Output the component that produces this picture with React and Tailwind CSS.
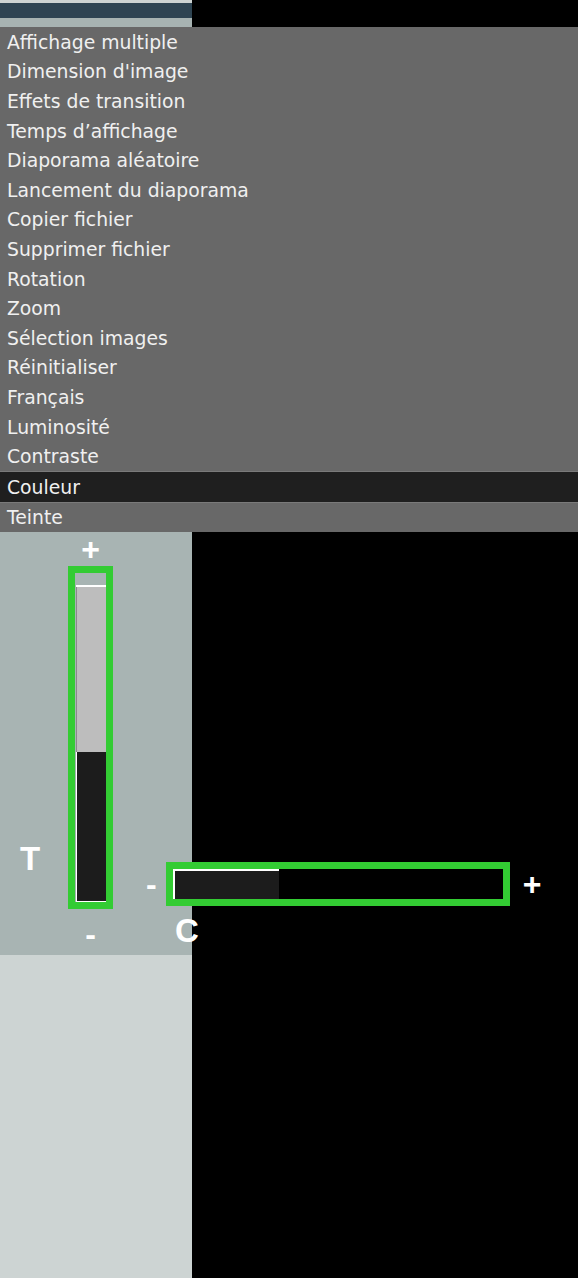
const menuItems = [
  'Affichage multiple',
  "Dimension d'image",
  'Effets de transition',
  'Temps d’affichage',
  'Diaporama aléatoire',
  'Lancement du diaporama',
  'Copier fichier',
  'Supprimer fichier',
  'Rotation',
  'Zoom',
  'Sélection images',
  'Réinitialiser',
  'Français',
  'Luminosité',
  'Contraste',
  'Couleur',
  'Teinte',
];

const label = "font-['Liberation_Sans',Arial,sans-serif] font-bold text-white leading-none";

function VerticalSlider() {
  return (
    <div className="flex w-[45px] flex-col items-center">
      <div className={`flex h-[34px] items-center text-[32px] ${label}`}>+</div>
      <div className="flex h-[343px] w-[45px] flex-col border-[7px] border-[#33cc33] pt-[12px]">
        <div className="ml-px flex w-[30px] flex-1 flex-col border-t-2 border-white">
          <div className="h-[165px] border-l border-[#8a8a8a] bg-[#bdbdbd]" />
          <div className="flex-1 border-b border-l border-white bg-[#1c1c1c]" />
        </div>
      </div>
      <div className={`flex h-[50px] items-center text-[32px] ${label}`}>-</div>
    </div>
  );
}

function HorizontalSlider() {
  return (
    <div className="absolute left-[146px] top-[330px] flex flex-col">
      <div className="flex h-[44px] items-center">
        <span className={`text-[32px] ${label}`}>-</span>
        <div className="ml-[9px] flex h-[44px] w-[344px] border-[7px] border-[#33cc33]">
          <div className="h-full w-[106px] border-l-2 border-t-2 border-white bg-[#1c1c1c]" />
        </div>
        <span className={`ml-[13px] text-[32px] ${label}`}>+</span>
      </div>
      <div className={`mt-[8px] pl-[29px] text-[33px] ${label}`}>C</div>
    </div>
  );
}

export default function App() {
  return (
    <div className="flex h-[1278px] w-[578px] flex-col overflow-hidden bg-black">
      {/* top strip */}
      <div className="flex h-[27px]">
        <div className="flex w-[192px] flex-col">
          <div className="h-[3px] bg-[#cdd3d2]" />
          <div className="h-[15px] bg-[#2e4452]" />
          <div className="flex-1 bg-[#a7b3b2]" />
        </div>
        <div className="flex-1 bg-black" />
      </div>

      {/* menu */}
      <div className="flex h-[505px] flex-col bg-[#686868] font-['DejaVu_Sans',Verdana,sans-serif] text-[18.8px] leading-[22px] text-[#f0f0f0]">
        {menuItems.map((item) => (
          <div
            key={item}
            className={`flex min-h-0 flex-1 basis-0 items-center pl-[7px] pt-[2px] ${
              item === 'Couleur' ? 'border-y border-[#7a7a7a] bg-[#1f1f1f]' : ''
            }`}
          >
            {item}
          </div>
        ))}
      </div>

      {/* controls */}
      <div className="relative flex flex-1">
        <div className="flex w-[192px] flex-col">
          <div className="flex h-[423px] items-start bg-[#a8b4b3] pl-[20px]">
            <div className={`mt-[310px] w-[48px] text-[33px] ${label}`}>T</div>
            <VerticalSlider />
          </div>
          <div className="flex-1 bg-[#cdd4d3]" />
        </div>
        <div className="flex-1 bg-black" />
        <HorizontalSlider />
      </div>
    </div>
  );
}
